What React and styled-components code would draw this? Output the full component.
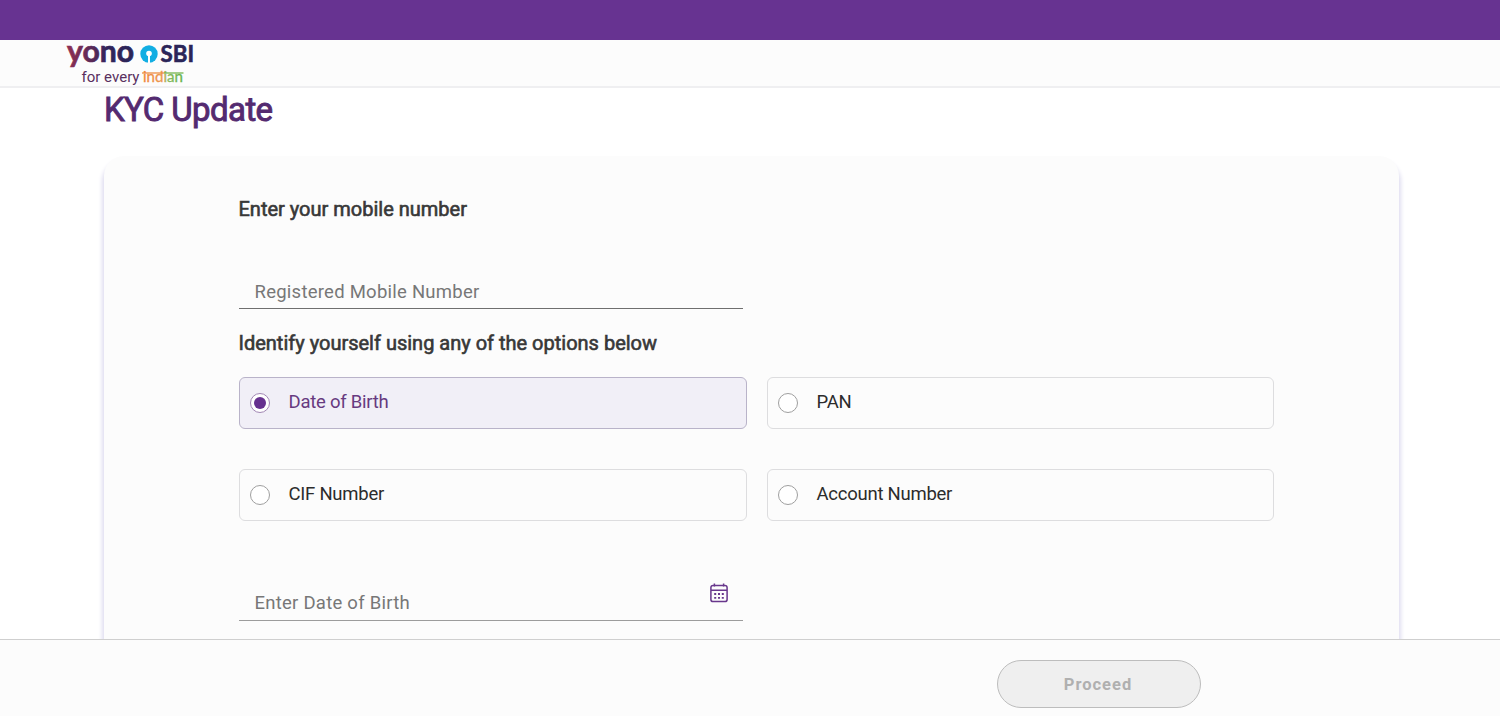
import React, { useState } from "react";
import styled, { createGlobalStyle } from "styled-components";

const OPTIONS = ["Date of Birth", "PAN", "CIF Number", "Account Number"];

const Logo = () => (
  <LogoSvg viewBox="0 0 130 46" role="img" aria-label="yono SBI for every indian">
    <defs>
      <linearGradient id="yono" x1="0" x2="1">
        <stop offset="0" stopColor="#8f2f52" />
        <stop offset="0.3" stopColor="#652b57" />
        <stop offset="0.6" stopColor="#31245a" />
        <stop offset="1" stopColor="#2b2558" />
      </linearGradient>
      <linearGradient id="indian" x1="0" x2="1">
        <stop offset="0" stopColor="#f0853b" />
        <stop offset="0.5" stopColor="#eb9a52" />
        <stop offset="0.6" stopColor="#8dbb60" />
        <stop offset="1" stopColor="#62b146" />
      </linearGradient>
    </defs>
    <LogoText
      x="1"
      y="21.5"
      $size={30}
      textLength="67"
      lengthAdjust="spacingAndGlyphs"
      fill="url(#yono)"
      stroke="url(#yono)"
      strokeWidth="0.7"
    >
      yono
    </LogoText>
    <circle cx="83" cy="14" r="8.7" fill="#12aee3" />
    <circle cx="83" cy="13.5" r="2.8" fill="#fff" />
    <path d="M82 14h2v9h-2z" fill="#fff" />
    <LogoText
      x="94.5"
      y="22"
      $size={23}
      textLength="33.5"
      lengthAdjust="spacingAndGlyphs"
      fill="#2b2558"
      stroke="#2b2558"
      strokeWidth="0.6"
    >
      SBI
    </LogoText>
    <LogoText
      x="15.5"
      y="41.5"
      $size={14.5}
      $family="Roboto"
      $weight={400}
      textLength="58"
      lengthAdjust="spacingAndGlyphs"
      fill="#59305f"
    >
      for every
    </LogoText>
    <LogoText
      x="77"
      y="41.5"
      $size={16}
      $weight={400}
      textLength="40"
      lengthAdjust="spacingAndGlyphs"
      fill="url(#indian)"
      stroke="url(#indian)"
      strokeWidth="0.3"
    >
      indian
    </LogoText>
    <path d="M76 33h22" stroke="#ed8d43" strokeWidth="1.3" />
    <path d="M98 33h19.5" stroke="#75b54e" strokeWidth="1.3" />
  </LogoSvg>
);

const CalendarIcon = () => (
  <CalendarSvg viewBox="0 0 18 20" fill="none" stroke="#68378c" strokeWidth="1.5">
    <rect x="0.9" y="2.4" width="16.2" height="16.2" rx="2.2" />
    <path d="M1 7.2h16M4.4 0.4v3M13.6 0.4v3" />
    <path d="M4.2 11h2M8 11h2M11.8 11h2M4.2 14.8h2M8 14.8h2M11.8 14.8h2" strokeWidth="1.8" />
  </CalendarSvg>
);

const App = () => {
  const [selected, setSelected] = useState(OPTIONS[0]);

  return (
    <Page>
      <GlobalStyle />
      <TopStrip />
      <Header>
        <Logo />
      </Header>
      <Main>
        <Title>KYC Update</Title>
        <Card>
          <Heading>Enter your mobile number</Heading>
          <Field $top={55} $line="#6f6f6f">
            <Input placeholder="Registered Mobile Number" />
          </Field>
          <Heading $top={22}>Identify yourself using any of the options below</Heading>
          <Options>
            {OPTIONS.map((option) => (
              <Option key={option} $active={option === selected}>
                <Radio
                  type="radio"
                  name="identity"
                  checked={option === selected}
                  onChange={() => setSelected(option)}
                />
                <OptionLabel>{option}</OptionLabel>
              </Option>
            ))}
          </Options>
          <Field $top={67} $line="#9c9c9c">
            <Input $lift={3} placeholder={`Enter ${selected}`} />
            <CalendarIcon />
          </Field>
        </Card>
      </Main>
      <Footer>
        <ProceedButton disabled>Proceed</ProceedButton>
      </Footer>
    </Page>
  );
};

export default App;

const GlobalStyle = createGlobalStyle`
  * {
    box-sizing: border-box;
  }

  body {
    margin: 0;
    background: #ffffff;
    font-family: Roboto, "Liberation Sans", sans-serif;
  }
`;

const Page = styled.div`
  display: flex;
  flex-direction: column;
  height: 100vh;
  overflow: hidden;
`;

const TopStrip = styled.div`
  flex: 0 0 40px;
  background: #673391;
`;

const Header = styled.header`
  flex: 0 0 48px;
  padding-left: 66px;
  background: #fcfcfc;
  border-bottom: 2px solid #efeff1;
`;

const LogoSvg = styled.svg`
  display: block;
  width: 130px;
  height: 46px;
  overflow: visible;
`;

const LogoText = styled.text`
  font-family: ${({ $family = "Lato" }) => $family}, "Noto Sans", sans-serif;
  font-size: ${({ $size }) => $size}px;
  font-weight: ${({ $weight = 700 }) => $weight};
`;

const Main = styled.main`
  flex: 1;
  min-height: 0;
  padding: 2px 101px 0 104px;
  overflow: hidden;
`;

const Title = styled.h1`
  margin: 0 0 26px;
  color: #542a70;
  font-size: 33px;
  font-weight: 400;
  letter-spacing: -0.6px;
  line-height: 40px;
  -webkit-text-stroke: 0.9px #542a70;
`;

const Card = styled.section`
  height: 600px;
  padding: 41px 125px 0 134.5px;
  background: #fcfcfc;
  border-radius: 20px;
  box-shadow: 0 6px 4px 2px #dfddf0;
`;

const Heading = styled.h2`
  margin: ${({ $top = 0 }) => $top}px 0 0;
  color: #383838;
  font-size: 20px;
  font-weight: 400;
  line-height: 24px;
  -webkit-text-stroke: 0.6px #383838;
`;

const Field = styled.div`
  display: flex;
  width: 504px;
  height: 33px;
  margin-top: ${({ $top }) => $top}px;
  padding: 0 15px 0 16px;
  border-bottom: 1px solid ${({ $line }) => $line};
`;

const Input = styled.input`
  flex: 1;
  min-width: 0;
  padding: 0 0 ${({ $lift = 0 }) => $lift}px;
  border: none;
  outline: none;
  background: transparent;
  color: #333333;
  font-family: inherit;
  font-size: 18.5px;
  letter-spacing: 0.25px;

  &::placeholder {
    color: #777777;
    opacity: 1;
  }
`;

const CalendarSvg = styled.svg`
  flex: none;
  width: 18px;
  height: 20px;
  margin-top: -5px;
`;

const Options = styled.div`
  display: grid;
  grid-template-columns: 508px 507px;
  gap: 40px 20px;
  margin-top: 22px;
`;

const Option = styled.label`
  display: flex;
  align-items: center;
  height: 52px;
  padding-left: 10.5px;
  background: ${({ $active }) => ($active ? "#f1eff7" : "#fcfcfc")};
  border: 1px solid ${({ $active }) => ($active ? "#b9b3c9" : "#dddddf")};
  border-radius: 6px;
  color: ${({ $active }) => ($active ? "#673a80" : "#2c2c2c")};
`;

const Radio = styled.input`
  display: grid;
  place-items: center;
  width: 20px;
  height: 20px;
  margin: 0;
  appearance: none;
  background: #ffffff;
  border: 1.5px solid #9f9f9f;
  border-radius: 50%;

  &:checked {
    border-color: #a287b4;
  }

  &:checked::before {
    content: "";
    width: 12px;
    height: 12px;
    background: #66308f;
    border-radius: 50%;
  }
`;

const OptionLabel = styled.span`
  padding: 0 0 3px 18.5px;
  font-size: 18.5px;
  letter-spacing: -0.25px;
  line-height: 22px;
`;

const Footer = styled.footer`
  flex: 0 0 77px;
  display: flex;
  justify-content: flex-end;
  padding: 20px 299px 0 0;
  background: #fcfcfc;
  border-top: 1px solid #cfcfcf;
`;

const ProceedButton = styled.button`
  width: 204px;
  height: 48px;
  padding: 0 2px 0 0;
  background: #efefef;
  border: 1px solid #bdbdbd;
  border-radius: 24px;
  color: #b0b0b0;
  font-family: inherit;
  font-size: 16.5px;
  font-weight: 700;
  letter-spacing: 1px;
`;
